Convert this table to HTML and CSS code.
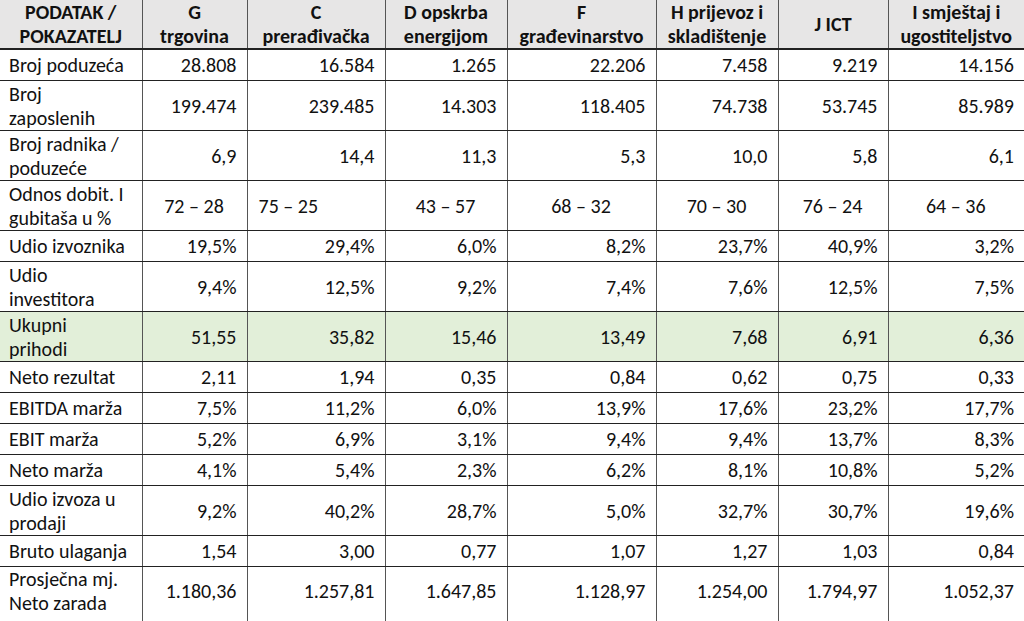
FILE: index.html
```html
<!DOCTYPE html>
<html lang="hr">
<head>
<meta charset="utf-8">
<title>Pokazatelji po djelatnostima</title>
<link rel="stylesheet" href="styles.css">
</head>
<body>
<table class="data">
  <colgroup>
    <col class="c0"><col class="c1"><col class="c2"><col class="c3"><col class="c4"><col class="c5"><col class="c6"><col class="c7">
  </colgroup>
  <thead>
    <tr class="head">
      <th>PODATAK /<br>POKAZATELJ</th>
      <th>G<br>trgovina</th>
      <th>C<br>prerađivačka</th>
      <th>D opskrba<br>energijom</th>
      <th>F<br>građevinarstvo</th>
      <th>H prijevoz i<br>skladištenje</th>
      <th>J ICT</th>
      <th>I smještaj i<br>ugostiteljstvo</th>
    </tr>
  </thead>
  <tbody>
    <tr class="single"><td class="label">Broj poduzeća</td><td>28.808</td><td>16.584</td><td>1.265</td><td>22.206</td><td>7.458</td><td>9.219</td><td>14.156</td></tr>
    <tr class="double"><td class="label">Broj<br>zaposlenih</td><td>199.474</td><td>239.485</td><td>14.303</td><td>118.405</td><td>74.738</td><td>53.745</td><td>85.989</td></tr>
    <tr class="double"><td class="label">Broj radnika /<br>poduzeće</td><td>6,9</td><td>14,4</td><td>11,3</td><td>5,3</td><td>10,0</td><td>5,8</td><td>6,1</td></tr>
    <tr class="double ratio"><td class="label">Odnos dobit. I<br>gubitaša u %</td><td>72 – 28</td><td class="left">75 – 25</td><td>43 – 57</td><td>68 – 32</td><td>70 – 30</td><td>76 – 24</td><td>64 – 36</td></tr>
    <tr class="single"><td class="label">Udio izvoznika</td><td>19,5%</td><td>29,4%</td><td>6,0%</td><td>8,2%</td><td>23,7%</td><td>40,9%</td><td>3,2%</td></tr>
    <tr class="double"><td class="label">Udio<br>investitora</td><td>9,4%</td><td>12,5%</td><td>9,2%</td><td>7,4%</td><td>7,6%</td><td>12,5%</td><td>7,5%</td></tr>
    <tr class="double hl"><td class="label">Ukupni<br>prihodi</td><td>51,55</td><td>35,82</td><td>15,46</td><td>13,49</td><td>7,68</td><td>6,91</td><td>6,36</td></tr>
    <tr class="single"><td class="label">Neto rezultat</td><td>2,11</td><td>1,94</td><td>0,35</td><td>0,84</td><td>0,62</td><td>0,75</td><td>0,33</td></tr>
    <tr class="single"><td class="label">EBITDA marža</td><td>7,5%</td><td>11,2%</td><td>6,0%</td><td>13,9%</td><td>17,6%</td><td>23,2%</td><td>17,7%</td></tr>
    <tr class="single"><td class="label">EBIT marža</td><td>5,2%</td><td>6,9%</td><td>3,1%</td><td>9,4%</td><td>9,4%</td><td>13,7%</td><td>8,3%</td></tr>
    <tr class="single"><td class="label">Neto marža</td><td>4,1%</td><td>5,4%</td><td>2,3%</td><td>6,2%</td><td>8,1%</td><td>10,8%</td><td>5,2%</td></tr>
    <tr class="double"><td class="label">Udio izvoza u<br>prodaji</td><td>9,2%</td><td>40,2%</td><td>28,7%</td><td>5,0%</td><td>32,7%</td><td>30,7%</td><td>19,6%</td></tr>
    <tr class="single"><td class="label">Bruto ulaganja</td><td>1,54</td><td>3,00</td><td>0,77</td><td>1,07</td><td>1,27</td><td>1,03</td><td>0,84</td></tr>
    <tr class="last"><td class="label">Prosječna mj.<br>Neto zarada</td><td class="mid">1.180,36</td><td class="mid">1.257,81</td><td class="mid">1.647,85</td><td class="mid">1.128,97</td><td class="mid">1.254,00</td><td class="mid">1.794,97</td><td class="mid">1.052,37</td></tr>
  </tbody>
</table>
</body>
</html>
```
FILE: styles.css
```css
html, body {
  margin: 0;
  padding: 0;
  background: #ffffff;
}

body {
  width: 1024px;
  height: 621px;
  overflow: hidden;
  font-family: Carlito, Calibri, Lato, "Liberation Sans", sans-serif;
  font-size: 20px;
  color: #111111;
}

.data {
  width: 1024px;
  border-collapse: collapse;
  table-layout: fixed;
}

.c0 { width: 142px; }
.c1 { width: 105px; }
.c2 { width: 138px; }
.c3 { width: 122px; }
.c4 { width: 149px; }
.c5 { width: 122px; }
.c6 { width: 110px; }
.c7 { width: 136px; }

.data th,
.data td {
  padding: 0 10px 0 9px;
  line-height: 24px;
  vertical-align: middle;
  border-left: 1px solid #555555;
  border-bottom: 1px solid #222222;
  white-space: nowrap;
  overflow: hidden;
}

.data th:first-child,
.data td:first-child {
  border-left: none;
}

.head th {
  height: 47px;
  background: #e7e6e6;
  font-weight: bold;
  text-align: center;
  padding: 0 4px;
  border-bottom: 2px solid #222222;
}

.data td {
  text-align: right;
}

.data td.label {
  text-align: left;
}

.single td {
  height: 30px;
}

.double td {
  height: 49px;
}

.last td {
  height: 56px;
  vertical-align: top;
  padding-top: 0;
  border-bottom: none;
}

.last td.mid {
  padding-top: 12px;
}

.ratio td {
  text-align: center;
}

.ratio td.left {
  text-align: left;
  padding-left: 11px;
}

.hl td {
  background: #e2efd9;
}
```
